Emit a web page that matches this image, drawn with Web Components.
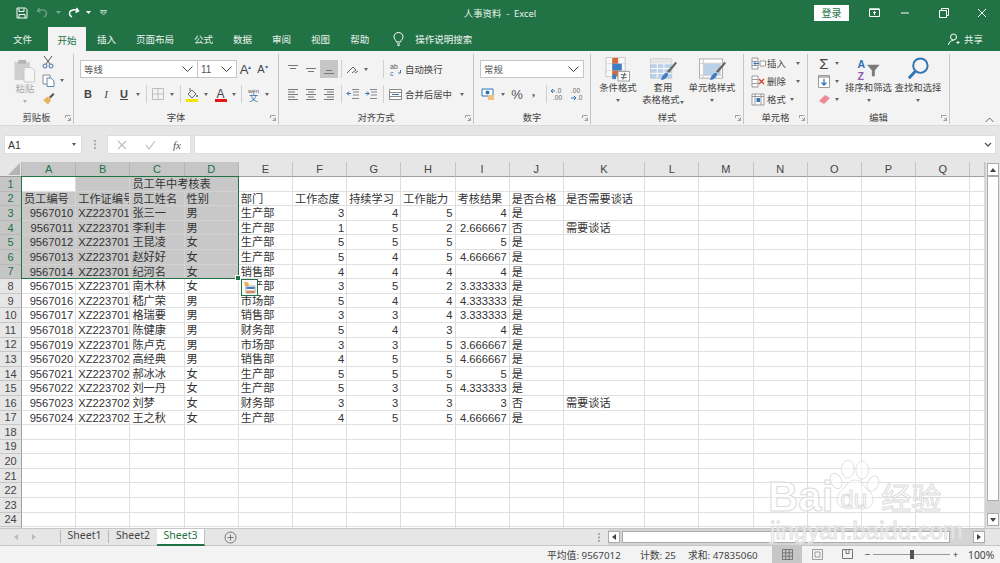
<!DOCTYPE html>
<html lang="zh"><head><meta charset="utf-8"><title>人事资料 - Excel</title>
<style>
html,body{margin:0;padding:0;width:1000px;height:563px;overflow:hidden;background:#e6e6e6}
body{display:flex;flex-direction:column;position:relative;font-family:"Liberation Sans","Noto Sans CJK SC",sans-serif}
</style></head><body>
<x-titlebar>人事资料 &nbsp;-&nbsp; Excel</x-titlebar>
<x-tabs></x-tabs>
<x-ribbon></x-ribbon>
<x-formula></x-formula>
<x-workarea></x-workarea>
<x-sheetbar></x-sheetbar>
<x-status></x-status>
<x-watermark></x-watermark>
<script>
const FONT='"Noto Sans","Noto Sans CJK SC",sans-serif';
function def(name,html,init){
  customElements.define(name,class extends HTMLElement{
    constructor(){super();const r=this.attachShadow({mode:'open'});r.innerHTML=html;if(init)init(r,this);}
  });
}
def('x-titlebar',`<style>
:host{display:grid;grid-template-columns:1fr auto 1fr;align-items:center;height:25px;background:#217346;color:#e8f1ec;font:9.4px ${FONT};flex:none}
.l,.r{display:flex;align-items:center}
.l{padding-left:14px}.l span{display:flex;justify-content:center;align-items:center}
.r{justify-content:flex-end}
.login{width:35px;height:16px;background:#fff;color:#217346;display:flex;align-items:center;justify-content:center;font-size:10px;margin-right:13px}
.w{width:36px;display:flex;justify-content:center}
svg{display:block}
</style>
<div class="l">
<span style="width:16px"><svg width="12" height="12" viewBox="0 0 12 12" fill="none" stroke="#fff"><path d="M1 1h8.500L11 2.500V11H1z"/><path d="M3 1.500v3h5v-3M3 11V7.500h6V11" /></svg></span>
<span style="width:21px;margin-left:2px;opacity:.35"><svg width="13" height="11" viewBox="0 0 13 11" fill="none" stroke="#fff" stroke-width="1.300"><path d="M3.500 1 1.500 4l3 1.500M2 4c3-2 8-1.500 8.500 2 .2 1.800-.8 3-2.500 4"/></svg></span>
<span style="width:10px;opacity:.4"><svg width="5" height="3"><path d="M0 0h5L2.500 3z" fill="#fff"/></svg></span>
<span style="width:21px"><svg width="13" height="11" viewBox="0 0 13 11" fill="none" stroke="#fff" stroke-width="1.400"><path d="M9.500 1l2 3-3 1.500M11 4C8 2 3 2.500 2.500 6c-.2 1.800.8 3 2.500 4"/></svg></span>
<span style="width:8px"><svg width="5" height="3"><path d="M0 0h5L2.500 3z" fill="#fff"/></svg></span>
<span style="width:18px;margin-left:2px;opacity:.7"><svg width="7" height="6" fill="none" stroke="#fff"><path d="M0 .5h7M.5 2l3 3 3-3z"/></svg></span>
</div>
<div class="t"><slot></slot></div>
<div class="r"><div class="login">登录</div>
<div class="w" style="width:24px"><svg width="11" height="10" viewBox="0 0 11 10" fill="none" stroke="#fff"><path d="M.5 1.500h10v7H.5z"/><path d="M5.500 7V3.500M4 5l1.500-1.500L7 5" /><path d="M.5 1h10" stroke-width="1.500"/></svg></div>
<div class="w" style="width:38px"><svg width="10" height="2"><path d="M1 1h8" stroke="#fff"/></svg></div>
<div class="w" style="width:40px"><svg width="10" height="10" fill="none" stroke="#fff"><path d="M.5 2.500h7v7h-7zM2.500 2.500v-2h7v7h-2"/></svg></div>
<div class="w"><svg width="10" height="10" stroke="#fff"><path d="M1 1l8 8M9 1l-8 8"/></svg></div>
</div>`);

def('x-tabs',`<style>
:host{display:flex;height:26px;background:#217346;color:#eef5f0;font:9.5px ${FONT};padding-left:3px;flex:none;align-items:stretch;box-sizing:border-box}
.t{padding:0 10px;display:flex;align-items:center;padding-top:2px;white-space:nowrap}
.on{background:#f3f3f3;color:#217346;margin:2px 1px 0 6px;padding:2px 9.500px 0}
.tell{display:flex;align-items:center;margin-left:14px;padding-top:2px}
.tell svg{margin-right:11px}
.share{margin-left:auto;display:flex;align-items:center;padding:2px 17px 0 0}
.share svg{margin-right:4px}
</style>
<div class="t">文件</div><div class="t on">开始</div><div class="t">插入</div><div class="t">页面布局</div><div class="t">公式</div><div class="t">数据</div><div class="t">审阅</div><div class="t">视图</div><div class="t">帮助</div>
<div class="tell"><svg width="11" height="14" viewBox="0 0 11 14" fill="none" stroke="#fff"><path d="M3.500 10C3 8 1 7 1 4.800a4.500 4.300 0 0 1 9 0C10 7 8 8 7.500 10zM4 12h3M4.500 13.500h2"/></svg>操作说明搜索</div>
<div class="share"><svg width="12" height="12" viewBox="0 0 12 12" fill="none" stroke="#fff"><circle cx="5.500" cy="4" r="3"/><path d="M.5 12c.3-3 2-4.500 5-4.500M8.500 9.500h3M10 8v3"/></svg>共享</div>`);

def('x-group',`<style>
:host{display:flex;flex-direction:column;flex:none;box-sizing:border-box;border-right:1px solid #c6c6c6;margin:3px 0 1px;color:#444}
.b{flex:1;min-height:0;display:flex}
.f{height:13px;display:grid;grid-template-columns:1fr auto 1fr;align-items:center;font-size:9.300px;line-height:13px}
.d{justify-self:end;margin-right:2px;display:flex}
</style><div class="b"><slot></slot></div>
<div class="f"><span></span><span><slot name="label"></slot></span><span class="d"><svg width="6" height="6" fill="none" stroke="#8a8a8a" stroke-width=".8"><path d="M.5 3V.5H5.500M5.500 5.500H2.500M5.500 2.500v3L3 3"/></svg></span></div>`);

const c='<i class="c"></i>';
def('x-ribbon',`<style>
:host{display:flex;height:74px;background:#f3f3f3;font:9.400px ${FONT};color:#444;flex:none;border-bottom:1px solid #dadada;box-sizing:content-box}
*{box-sizing:border-box}
svg{display:block}
.rows{display:flex;flex-direction:column;gap:7px;padding-top:6px}
.row{display:flex;height:18px;align-items:center}
.i{display:flex;align-items:center;justify-content:center;height:18px;flex:none}
.c{display:block;width:0;height:0;border:2.500px solid transparent;border-top:3px solid #666;border-bottom:0}
.s{width:1px;height:18px;background:#d0d0d0;margin:0 2.500px;flex:none}
.sel{width:104px;height:18px;background:#fff;border:1px solid #c6c6c6;display:flex;align-items:center;justify-content:space-between;padding:0 4px 0 3px;color:#555;flex:none}
.big{display:flex;flex-direction:column;align-items:center;flex:none;line-height:12px;text-align:center}
.big svg{height:25px}
.big .c{margin:5px auto 0}
.wrapc{display:inline-block;vertical-align:middle;margin-left:2px}
.lines{display:flex;flex-direction:column;padding-top:3px}
.lines>div{display:flex;align-items:center;height:18px}
b.B{font:bold 11px "Liberation Sans";color:#444}
</style>
<x-group style="width:74px"><span slot="label">剪贴板</span>
 <div style="display:flex;padding-left:12px">
  <div class="big" style="width:26px;color:#a8a8a8;padding-top:4px">
   <svg width="24" height="25" viewBox="0 0 24 26"><path d="M1 4h16v19H1z" fill="#cfcfcf"/><path d="M5 2h8v4H5z" fill="#b5b5b5"/><path d="M11 10h8l3 3v12H11z" fill="#f6f6f6" stroke="#c8c8c8"/></svg>
   <span>粘贴</span><i class="c" style="border-top-color:#aaa"></i></div>
  <div class="lines" style="width:34px;padding-top:0;margin:-1px 0 0 1px">
   <div><span class="i" style="width:18px"><svg width="12" height="14" viewBox="0 0 12 14" fill="none" stroke="#555"><path d="M2 1l6 8M10 1 4 9"/><circle cx="3" cy="11" r="2" stroke="#3f6fa8"/><circle cx="9" cy="11" r="2" stroke="#3f6fa8"/></svg></span></div>
   <div><span class="i" style="width:18px"><svg width="13" height="13" viewBox="0 0 13 13" fill="#fff" stroke="#8a8a8a"><path d="M1 1h7v9H1z"/><path d="M5 4h4l3 3v5.500H5z" stroke="#5b87b8"/></svg></span><span class="i" style="width:10px">${c}</span></div>
   <div><span class="i" style="width:18px"><svg width="13" height="13" viewBox="0 0 13 13"><path d="M7 5l4-4 1.500 1.500-4 4z" fill="#555"/><path d="M1 8l5-3.500L9 8l-3 4.500z" fill="#e8b15b"/></svg></span></div>
  </div>
 </div>
</x-group>
<x-group style="width:205px"><span slot="label">字体</span>
 <div class="rows" style="padding-left:6px">
  <div class="row">
   <div class="sel" style="width:117px;border-right:0"><span>等线</span><svg width="11" height="6" fill="none" stroke="#444"><path d="M.5.500 5.500 5.500l5-5"/></svg></div>
   <div class="sel" style="width:40px"><span style="font:10px 'Liberation Sans'">11</span><svg width="11" height="6" fill="none" stroke="#444"><path d="M.5.500 5.500 5.500l5-5"/></svg></div>
   <span class="i" style="width:17px;margin-left:0;font:13px 'Liberation Sans'">A<sup style="font-size:6px;color:#3f6fa8;margin-top:-6px">▴</sup></span>
   <span class="i" style="width:17px;font:11px 'Liberation Sans'">A<sup style="font-size:6px;color:#3f6fa8;margin-top:-6px">▾</sup></span>
  </div>
  <div class="row" style="margin-left:-1px">
   <span class="i" style="width:18px"><b class="B">B</b></span>
   <span class="i" style="width:18px;font:italic 11px 'Liberation Serif'">I</span>
   <span class="i" style="width:18px;font:bold 11px 'Liberation Sans';text-decoration:underline">U</span>
   <span class="i" style="width:10px">${c}</span><span class="s"></span>
   <span class="i" style="width:18px"><svg width="12" height="12" fill="none" stroke="#bdbdbd"><path d="M.5.500h11v11H.5zM6 .5v11M.5 6h11"/></svg></span>
   <span class="i" style="width:10px">${c}</span><span class="s"></span>
   <span class="i" style="width:18px"><svg width="14" height="15" viewBox="0 0 14 15"><path d="M3 7l4-4 4 4-4 4z" fill="#f2f2f2" stroke="#666"/><path d="M5 1v3" stroke="#666"/><circle cx="12" cy="9" r="1" fill="#3f6fa8"/><path d="M1 12h12v3H1z" fill="#f5e600"/></svg></span>
   <span class="i" style="width:10px">${c}</span>
   <span class="i" style="width:18px"><svg width="13" height="15" viewBox="0 0 13 15"><path d="M1 12h12v3H1z" fill="#e81416"/><text x="6.500" y="10.500" text-anchor="middle" font-family="Liberation Sans" font-size="12" fill="#444">A</text></svg></span>
   <span class="i" style="width:9px">${c}</span><span class="s"></span>
   <span class="i" style="width:18px"><svg width="15" height="16" viewBox="0 0 15 16" style="overflow:visible"><text x="7.500" y="6.500" text-anchor="middle" font-family="Liberation Sans" font-size="6" fill="#555">wén</text><text x="7.500" y="15" text-anchor="middle" font-family="Noto Sans CJK SC" font-size="9" fill="#3f77b5">文</text></svg></span>
   <span class="i" style="width:10px">${c}</span>
  </div>
 </div>
</x-group>
<x-group style="width:195px"><span slot="label">对齐方式</span>
 <div class="rows" style="padding-left:5px">
  <div class="row">
   <span class="i" style="width:18px"><svg width="12" height="12" stroke="#777"><path d="M1 2.500h10M3 5.500h6"/></svg></span>
   <span class="i" style="width:18px"><svg width="12" height="12" stroke="#777"><path d="M1 5.500h10M3 8.500h6"/></svg></span>
   <span class="i" style="width:18px;background:#c6c6c6"><svg width="12" height="12" stroke="#777"><path d="M3 7.500h6M1 10.500h10"/></svg></span>
   <span class="s"></span>
   <span class="i" style="width:16px"><svg width="13" height="11" viewBox="0 0 13 11" fill="none" stroke="#666"><path d="M1 9l6-6 3 3-4 3M9 9l3-2"/></svg></span>
   <span class="i" style="width:12px">${c}</span>
   <span class="s" style="margin-left:10.500px"></span>
   <span class="i" style="width:18px"><svg width="13" height="13" viewBox="0 0 13 13" style="overflow:visible"><text x="1" y="6" font-family="Liberation Sans" font-size="7" fill="#555">ab</text><text x="1" y="12.500" font-family="Liberation Sans" font-size="7" fill="#3f77b5">c</text><path d="M9 10h2.500V7" fill="none" stroke="#3f77b5"/></svg></span>
   <span style="margin-left:1px">自动换行</span>
  </div>
  <div class="row">
   <span class="i" style="width:18px"><svg width="12" height="12" stroke="#777"><path d="M1 1.500h10M1 4h7M1 6.500h10M1 9h7M1 11.500h10"/></svg></span>
   <span class="i" style="width:18px"><svg width="12" height="12" stroke="#777"><path d="M1 1.500h10M3 4h6M1 6.500h10M3 9h6M1 11.500h10"/></svg></span>
   <span class="i" style="width:18px"><svg width="12" height="12" stroke="#777"><path d="M1 1.500h10M4 4h7M1 6.500h10M4 9h7M1 11.500h10"/></svg></span>
   <span class="s"></span>
   <span class="i" style="width:17px"><svg width="13" height="12" stroke="#888"><path d="M6 1.500h7M7 4h6M7 7h6M6 10.500h7"/><path d="M5 5.500H1M3 3.500 1 5.500l2 2" stroke="#2f75b5" fill="none"/></svg></span>
   <span class="i" style="width:18px"><svg width="13" height="12" stroke="#888"><path d="M6 1.500h7M7 4h6M7 7h6M6 10.500h7"/><path d="M1 5.500h4M3 3.500l2 2-2 2" stroke="#2f75b5" fill="none"/></svg></span>
   <span class="s" style="margin-left:3.500px"></span>
   <span class="i" style="width:18px"><svg width="13" height="13" fill="#fff" stroke="#888"><path d="M.5 1.500h12v10H.5zM.5 4.500h12M.5 8.500h12"/><path d="M3 6.500h7" stroke="#2f75b5"/></svg></span>
   <span style="margin-left:1px">合并后居中</span>
   <span class="i" style="width:10px;margin-left:5px">${c}</span>
  </div>
 </div>
</x-group>
<x-group style="width:117px"><span slot="label">数字</span>
 <div class="rows" style="padding-left:6px">
  <div class="row"><div class="sel"><span>常规</span><svg width="11" height="6" fill="none" stroke="#444"><path d="M.5.500 5.500 5.500l5-5"/></svg></div></div>
  <div class="row">
   <span class="i" style="width:16px"><svg width="14" height="14" viewBox="0 0 14 14"><path d="M1 2h11v7H1z" fill="#fff" stroke="#2f75b5"/><circle cx="6.500" cy="5.500" r="2" fill="#2f75b5"/><path d="M7 8h6v5H7z" fill="#eec27a"/></svg></span>
   <span class="i" style="width:14px">${c}</span>
   <span class="i" style="width:14px;font:13px 'Liberation Sans';color:#555">%</span>
   <span class="i" style="width:19px;font:bold 12px 'Liberation Serif';color:#555;padding-bottom:3px">,</span>
   <span class="s"></span>
   <span class="i" style="width:18px"><svg width="16" height="14" viewBox="0 0 16 14" style="overflow:visible"><text x="6" y="6" font-family="Liberation Sans" font-size="6.500" fill="#666">.0</text><text x="3" y="13" font-family="Liberation Sans" font-size="6.500" fill="#666">.00</text><path d="M1 4h4M3 2 1 4l2 2" stroke="#2f75b5" fill="none"/></svg></span>
   <span class="i" style="width:17px"><svg width="16" height="14" viewBox="0 0 16 14" style="overflow:visible"><text x="3" y="6" font-family="Liberation Sans" font-size="6.500" fill="#666">.00</text><text x="9" y="13" font-family="Liberation Sans" font-size="6.500" fill="#666">.0</text><path d="M3 11h5M6 9l2 2-2 2" stroke="#2f75b5" fill="none"/></svg></span>
  </div>
 </div>
</x-group>
<x-group style="width:153px"><span slot="label">样式</span>
 <div style="display:flex;padding:3px 0 0 5px">
  <div class="big" style="width:44px">
   <svg width="26" height="25" viewBox="0 0 26 26"><path d="M.5 .5h20v20H.5z" fill="#fafafa" stroke="#c6c6c6"/><path d="M7.500 0v21M14 0v21M0 7h21M0 14h21" stroke="#d8d8d8"/><path d="M7 1h6v6H7zM7 14h6v6H7z" fill="#d8693c"/><path d="M7 7h10v7H7z" fill="#3f7fc1"/><path d="M7 18h4v5H7z" fill="#3f7fc1"/><path d="M13 15h12v10H13z" fill="#fff" stroke="#999"/><path d="M16 18.500h6M16 21.500h6M18 23.500l2-7" stroke="#555" fill="none"/></svg>
   <span>条件格式</span>${c}</div>
  <div class="big" style="width:46px">
   <svg width="30" height="25" viewBox="0 0 30 26"><path d="M2 2h22v20H2z" fill="#fff" stroke="#bbb"/><path d="M2 7h22v15H2z" fill="#bcd0e8"/><path d="M2 7h22M2 12h22M2 17h22M9 2v20M16 2v20" stroke="#fff"/><path d="M2 2h22v5H2z" fill="#e6e6e6"/><path d="M19 15l9-10 1.500 1.500-8 10z" fill="#666"/><path d="M13 24c1-5 4-8 7-7.500 1 1.500-1 7.500-7 7.500z" fill="#3f7fc1"/></svg>
   <span>套用<br>表格格式<i class="c wrapc"></i></span></div>
  <div class="big" style="width:52px">
   <svg width="30" height="25" viewBox="0 0 30 26"><path d="M2 2h24v20H2z" fill="#fff" stroke="#aaa"/><path d="M6 7h18v12H6z" fill="#bcd0e8"/><path d="M2 6.500h24M6 2v20M2 19h24" stroke="#ccc" fill="none"/><path d="M19 15l9-10 1.500 1.500-8 10z" fill="#666"/><path d="M13 24c1-5 4-8 7-7.500 1 1.500-1 7.500-7 7.500z" fill="#3f7fc1"/></svg>
   <span>单元格样式</span>${c}</div>
 </div>
</x-group>
<x-group style="width:64px"><span slot="label">单元格</span>
 <div class="lines" style="padding-left:5px;padding-top:0">
  <div><span class="i" style="width:18px"><svg width="15" height="13" viewBox="0 0 15 13" fill="#fff" stroke="#999"><path d="M1 1h6v11H1zM1 4.500h6M1 8.500h6M9 4h5.500v5H9z"/><path d="M8 6.500H3M5 4.500l-2 2 2 2" stroke="#2f75b5" fill="none"/></svg></span><span style="width:27px">插入</span><span class="i" style="width:8px">${c}</span></div>
  <div><span class="i" style="width:18px"><svg width="15" height="13" viewBox="0 0 15 13" fill="#fff" stroke="#999"><path d="M1 1h6v11H1zM1 4.500h6M1 8.500h6"/><path d="M8 4l5 5M13 4l-5 5" stroke="#d24726" stroke-width="1.400"/></svg></span><span style="width:27px">删除</span><span class="i" style="width:8px">${c}</span></div>
  <div><span class="i" style="width:18px"><svg width="14" height="13" viewBox="0 0 14 13" fill="#fff" stroke="#999"><path d="M1 1h12v11H1zM1 3.500h12M4 1v11M10 1v11"/><path d="M5.500 5h3.500v4H5.500z" fill="#2f75b5" stroke="none"/></svg></span><span style="width:21px">格式</span><span class="i" style="width:8px">${c}</span></div>
 </div>
</x-group>
<x-group style="width:142px"><span slot="label">编辑</span>
 <div style="display:flex;padding-left:6px">
  <div class="lines" style="width:30px;padding-top:0">
   <div><span class="i" style="width:20px;font:15px 'Liberation Sans';color:#444">Σ</span><span class="i" style="width:8px;margin-left:-1px">${c}</span></div>
   <div><span class="i" style="width:20px"><svg width="12" height="13" viewBox="0 0 12 13" fill="#fff" stroke="#999"><path d="M.5.500h11v12H.5z"/><path d="M.5 2h11" stroke="#777"/><path d="M6 4v6M3.500 7.500 6 10l2.500-2.500" stroke="#2f75b5" stroke-width="1.300" fill="none"/></svg></span><span class="i" style="width:8px;margin-left:-1px">${c}</span></div>
   <div><span class="i" style="width:20px"><svg width="13" height="11" viewBox="0 0 13 11"><path d="M1 7l6-6 5 3-6 6z" fill="#ec8a96"/></svg></span><span class="i" style="width:8px;margin-left:-1px">${c}</span></div>
  </div>
  <div class="big" style="width:49px;padding-top:3px">
   <svg width="26" height="25" viewBox="0 0 26 26"><text x="1" y="11" font-family="Liberation Sans" font-weight="bold" font-size="11" fill="#2f75b5">A</text><text x="1" y="24" font-family="Liberation Sans" font-weight="bold" font-size="11" fill="#8e5bb5">Z</text><path d="M11 8h13l-5 6v6h-3v-6z" fill="#7a7a7a"/></svg>
   <span style="white-space:nowrap">排序和筛选</span>${c}</div>
  <div class="big" style="width:50px;padding-top:3px">
   <svg width="26" height="25" viewBox="0 0 26 26" fill="none"><circle cx="15.500" cy="9" r="7.500" stroke="#2f75b5" stroke-width="2"/><path d="M10 15 3.500 22" stroke="#2f75b5" stroke-width="3"/></svg>
   <span style="white-space:nowrap">查找和选择</span>${c}</div>
 </div>
</x-group>
<svg style="margin:auto 6px 2px auto;width:9px;height:6px" fill="none" stroke="#666"><path d="M.5 5 4.500 1l4 4"/></svg>`);

def('x-formula',`<style>
:host{display:flex;height:36px;padding-top:9px;box-sizing:border-box;background:#e6e6e6;flex:none;font:10.500px "Liberation Sans";color:#333}
.box{background:#fff;height:19px;display:flex;align-items:center;box-sizing:border-box;flex:none;border:1px solid #dedede}
.name{width:78px;margin-left:4px;padding:0 5px 0 3px;justify-content:space-between}
.dots{width:25px;height:19px;display:flex;justify-content:center;align-items:center;flex:none}
.fx{width:84px;justify-content:space-between;padding:0 9px}
.inp{flex:1;margin:0 4px 0 3px;justify-content:flex-end;padding-right:3px}
i.c{width:0;height:0;border:2.500px solid transparent;border-top:3px solid #555;border-bottom:0}
</style>
<div class="box name"><span>A1</span><i class="c"></i></div>
<div class="dots"><svg width="2" height="9" fill="#aaa"><path d="M0 0h2v2H0zM0 3.500h2v2H0zM0 7h2v2H0z"/></svg></div>
<div class="box fx"><svg width="10" height="10" stroke="#bdbdbd" stroke-width="1.200"><path d="M1 1l8 8M9 1l-8 8"/></svg><svg width="11" height="10" fill="none" stroke="#bdbdbd" stroke-width="1.200"><path d="M1 5l3 4 6-8"/></svg><span style="font:italic 11px 'Liberation Serif';color:#555">fx</span></div>
<div class="box inp"><svg width="8" height="5" fill="none" stroke="#555" stroke-width="1.300"><path d="M1 1l3 3 3-3"/></svg></div>`);

const letters='ABCDEFGHIJKLMNOPQ'.split('');
const P='生产部',S='销售部',M='市场部',F='财务部',X1='XZ223701',X2='XZ223702';
const data=[
['9567010',X1,'张三一','男',P,3,4,5,'4','是'],
['9567011',X1,'李利丰','男',P,1,5,2,'2.666667','否','需要谈话'],
['9567012',X1,'王昆凌','女',P,5,5,5,'5','是'],
['9567013',X1,'赵好好','女',P,5,4,5,'4.666667','是'],
['9567014',X1,'纪河名','女',S,4,4,4,'4','是'],
['9567015',X1,'南木林','女',P,3,5,2,'3.333333','是'],
['9567016',X1,'嵇广荣','男',M,5,4,4,'4.333333','是'],
['9567017',X1,'格瑞要','男',S,3,3,4,'3.333333','是'],
['9567018',X1,'陈健康','男',F,5,4,3,'4','是'],
['9567019',X1,'陈卢克','男',M,3,3,5,'3.666667','是'],
['9567020',X2,'高经典','男',S,4,5,5,'4.666667','是'],
['9567021',X2,'郝冰冰','女',P,5,5,5,'5','是'],
['9567022',X2,'刘一丹','女',P,5,3,5,'4.333333','是'],
['9567023',X2,'刘梦','女',F,3,3,3,'3','否','需要谈话'],
['9567024',X2,'王之秋','女',P,4,5,5,'4.666667','是']];
const rows={2:['员工编号','工作证编号','员工姓名','性别','部门','工作态度','持续学习','工作能力','考核结果','是否合格','是否需要谈话']};
data.forEach((d,i)=>rows[i+3]=d);
const numCol=new Set([0,5,6,7,8]);
let h='<div class="corner"><svg width="12" height="12"><path d="M12 0v12H0z" fill="#b4b4b4"/></svg></div>';
letters.forEach((l,i)=>h+=`<div class="ch${i<4?' hs':''}">${l}</div>`);
h+='<div class="ch"></div>';
for(let r=1;r<=25;r++){
  h+=`<div class="rh${r<=7?' hs':''}">${r}</div>`;
  for(let c2=0;c2<18;c2++){
    const sel=r<=7&&c2<4&&!(r==1&&c2==0);
    let v=(rows[r]&&rows[r][c2]!==undefined)?rows[r][c2]:'';
    let cls='cell'+(sel?' sel':'');
    if(r==1&&c2==2){v='员工年中考核表';cls+=' ov';}
    if(r>2&&numCol.has(c2))cls+=' num';
    h+=`<div class="${cls}">${v}</div>`;
  }
}
def('x-workarea',`<style>
:host{display:flex;height:366px;flex:none;background:#fff;position:relative}
.grid{flex:none;width:985px;display:grid;grid-template-columns:22px repeat(10,54.2px) 81.3px repeat(6,54.2px) 1fr;grid-template-rows:15px;grid-auto-rows:14.6px;overflow:hidden;height:366px;font:11.200px "Liberation Sans","Noto Sans CJK SC",sans-serif;color:#333;border-bottom:0}
.corner{background:#e6e6e6;display:flex;justify-content:flex-end;align-items:flex-end;padding:0 1px 1px 0;box-sizing:border-box;border-right:1px solid #b8b8b8;border-bottom:1px solid #9a9a9a}
.ch,.rh{background:#e6e6e6;color:#444;display:flex;align-items:center;justify-content:center;box-sizing:border-box;border-right:1px solid #c4c4c4;border-bottom:1px solid #9f9f9f;font-size:11px}
.rh{border-bottom:1px solid #c8c8c8;border-right:1px solid #9f9f9f}
.hs{background:#c6c6c6;color:#217346;border-right-color:#b4b4b4}
.rh.hs{border-bottom-color:#b8b8b8;border-right-color:#9f9f9f}
.cell{box-sizing:border-box;border-right:1px solid #dfdfdf;border-bottom:1px solid #dfdfdf;white-space:nowrap;overflow:hidden;padding:0 1px 0 2px;line-height:14px}
.sel{background:#c8c8c8;border-color:#d2d2d2}
.num{text-align:right;padding-right:2px}
.ov{overflow:visible;position:relative;z-index:1;border-right-color:transparent}
.selbox{position:absolute;left:21px;top:14px;width:218px;height:103px;border:1.500px solid #217346;box-sizing:border-box;pointer-events:none;z-index:2}
.handle{position:absolute;right:-3px;bottom:-3px;width:4px;height:4px;background:#217346;border:1px solid #fff}
.tag{position:absolute;left:241px;top:117px;width:17px;height:17px;box-sizing:border-box;border:1.500px solid #217346;background:#fafafa;z-index:3;display:flex;align-items:center;justify-content:center}
.vs{flex:none;width:15px;background:#e6e6e6;display:flex;flex-direction:column;align-items:center;box-sizing:border-box;padding-top:1px;border-left:1px solid #d0d0d0}
.b{width:12px;height:13px;background:#fff;border:1px solid #aaa;box-sizing:border-box;display:flex;align-items:center;justify-content:center;flex:none}
.th{width:12px;height:325px;background:#fff;border:1px solid #aaa;box-sizing:border-box;flex:none;margin-top:0}
.tr{flex:1;background:#d0d0d0;width:100%}
</style>
<div class="grid">${h}</div>
<div class="selbox"><div class="handle"></div></div>
<div class="tag"><svg width="13" height="13" viewBox="0 0 13 13"><path d="M1 1l3 0 2 2-1 3-3-1z" fill="#eeb04c"/><path d="M3 5h9v7H3z" fill="#fff" stroke="#8a8a8a" stroke-width=".7"/><path d="M3.500 6h8v2h-8z" fill="#3f7fc1"/><path d="M3.500 9.500h8V12h-8z" fill="#d9895f"/></svg></div>
<div class="vs"><div class="b"><svg width="6" height="4"><path d="M3 0l3 4H0z" fill="#444"/></svg></div><div class="th"></div><div class="tr"></div><div class="b" style="margin-bottom:2px"><svg width="6" height="4"><path d="M0 0h6L3 4z" fill="#444"/></svg></div></div>`);

def('x-sheetbar',`<style>
:host{display:flex;height:18px;flex:none;background:#e6e6e6;border-top:1px solid #c6c6c6;border-bottom:1px solid #c6c6c6;box-sizing:border-box;font:10.500px "Noto Sans","Noto Sans CJK SC",sans-serif;color:#444;align-items:stretch}
.nav{width:60px;display:flex;align-items:center;padding-left:14px;gap:14px;box-sizing:border-box;flex:none}
.t{display:flex;align-items:center;justify-content:center;flex:none;padding-bottom:4px;box-sizing:border-box}
.sp{width:1px;background:#b8b8b8;margin:1px 0 2px;flex:none}
.on{background:#fff;color:#217346;width:48px;border-bottom:2px solid #217346;margin-bottom:-1px;border-right:1px solid #c0c0c0;padding-bottom:3px}
.add{width:50px;display:flex;justify-content:center;align-items:center;margin-left:0;flex:none}
.grip{margin-left:auto;width:11px;margin-right:4px;display:flex;align-items:center;justify-content:center}
.sb{display:flex;align-items:center;width:377px;flex:none;margin-right:15px;background:#d4d4d4}
.b{width:12px;height:12px;background:#fff;border:1px solid #aaa;box-sizing:border-box;display:flex;align-items:center;justify-content:center;flex:none}
.th{height:12px;width:328px;background:#fff;border:1px solid #aaa;box-sizing:border-box;margin:0 23px 0 2px;flex:none}
</style>
<div class="nav"><svg width="4" height="6" fill="#bbb"><path d="M4 0v6L0 3z"/></svg><svg width="4" height="6" fill="#bbb"><path d="M0 0v6l4-3z"/></svg></div>
<div class="sp"></div><div class="t" style="width:47px">Sheet1</div><div class="sp"></div><div class="t" style="width:48px">Sheet2</div><div class="t on">Sheet3</div>
<div class="add"><svg width="13" height="13" viewBox="0 0 13 13" fill="none" stroke="#777"><circle cx="6.500" cy="6.500" r="5.500"/><path d="M6.500 3.500v6M3.500 6.500h6"/></svg></div>
<div class="grip"><svg width="2" height="9" fill="#aaa"><path d="M0 0h2v2H0zM0 3.500h2v2H0zM0 7h2v2H0z"/></svg></div>
<div class="sb"><div class="b"><svg width="4" height="6"><path d="M4 0v6L0 3z" fill="#444"/></svg></div><div class="th"></div><div class="b"><svg width="4" height="6"><path d="M0 0v6l4-3z" fill="#444"/></svg></div></div>`);

def('x-status',`<style>
:host{display:flex;flex:1;background:#f3f3f3;font:9.800px "Noto Sans","Noto Sans CJK SC",sans-serif;color:#444;align-items:stretch;padding-left:547px;box-sizing:border-box}
span{display:flex;align-items:center;white-space:nowrap;flex:none}
.v{width:30px;justify-content:center;flex:none}
.on{background:#c6c6c6}
.sl{width:77px;height:100%;display:flex;align-items:center;position:relative;flex:none}
.sl i{display:block;height:1px;background:#999;flex:1}
.sl b{width:4px;height:9px;background:#555;flex:none;margin:0 0 0 0}
</style>
<span style="width:93px">平均值: 9567012</span><span style="width:48px">计数: 25</span><span style="width:84px">求和: 47835060</span>
<span class="v on"><svg width="11" height="11" fill="none" stroke="#666" stroke-width=".8"><path d="M.5.500h10v10H.5zM3.800.5v10M7.200.5v10M.5 3.800h10M.5 7.200h10"/></svg></span>
<span class="v"><svg width="11" height="11" fill="none" stroke="#888" stroke-width=".8"><path d="M.5.500h10v10H.5zM3 3h5v5H3z"/></svg></span>
<span class="v"><svg width="11" height="11" fill="none" stroke="#666" stroke-width=".9"><path d="M.5.500h10v9H.5zM4 .5v4h3V.5"/></svg></span>
<span style="width:11px;justify-content:center">−</span>
<div class="sl"><i></i><b></b><i></i></div>
<span style="width:11px;justify-content:center">+</span>
<span style="margin-left:7px;font-size:10.300px">100%</span>`);

def('x-watermark',`<style>
:host{position:absolute;left:768px;top:455px;width:190px;height:88px;pointer-events:none;z-index:9;display:block;font-family:"Liberation Sans","Noto Sans CJK SC",sans-serif;color:rgba(255,255,255,.55);-webkit-text-stroke:1px #dcdcdc}
.a{display:flex;align-items:flex-end;height:60px;font-weight:bold;line-height:36px;font-size:42px}
.paw{flex:none;width:54px;height:55px;position:relative;margin:0 -1px 3px -5px}
.paw svg{display:block}
.du{position:absolute;left:12px;top:31px;font-size:24px;line-height:22px;font-weight:normal;letter-spacing:0}
.j{font-size:23.500px;line-height:24px;margin:4px 0 0 2px;white-space:nowrap;font-weight:normal;letter-spacing:.2px}
.zh{font-size:30px;font-weight:normal;line-height:32px}
</style>
<div class="a"><span>Bai</span><span class="paw"><svg width="54" height="55" viewBox="0 0 60 58" fill="rgba(255,255,255,.55)" stroke="#dcdcdc"><ellipse cx="22" cy="12" rx="7" ry="10"/><ellipse cx="38" cy="13" rx="7" ry="10"/><ellipse cx="9" cy="25" rx="6" ry="9" transform="rotate(-25 9 25)"/><ellipse cx="50" cy="28" rx="6" ry="9" transform="rotate(25 50 28)"/><path d="M30 24c-8 0-10 8-16 13-7 6-5 19 8 19 4 0 5-1 8-1s5 1 9 1c12 0 14-13 7-19-6-5-8-13-16-13z"/></svg><span class="du">du</span></span><span class="zh">经验</span></div>
<div class="j">jingyan.baidu.com</div>`);
</script>
</body></html>
